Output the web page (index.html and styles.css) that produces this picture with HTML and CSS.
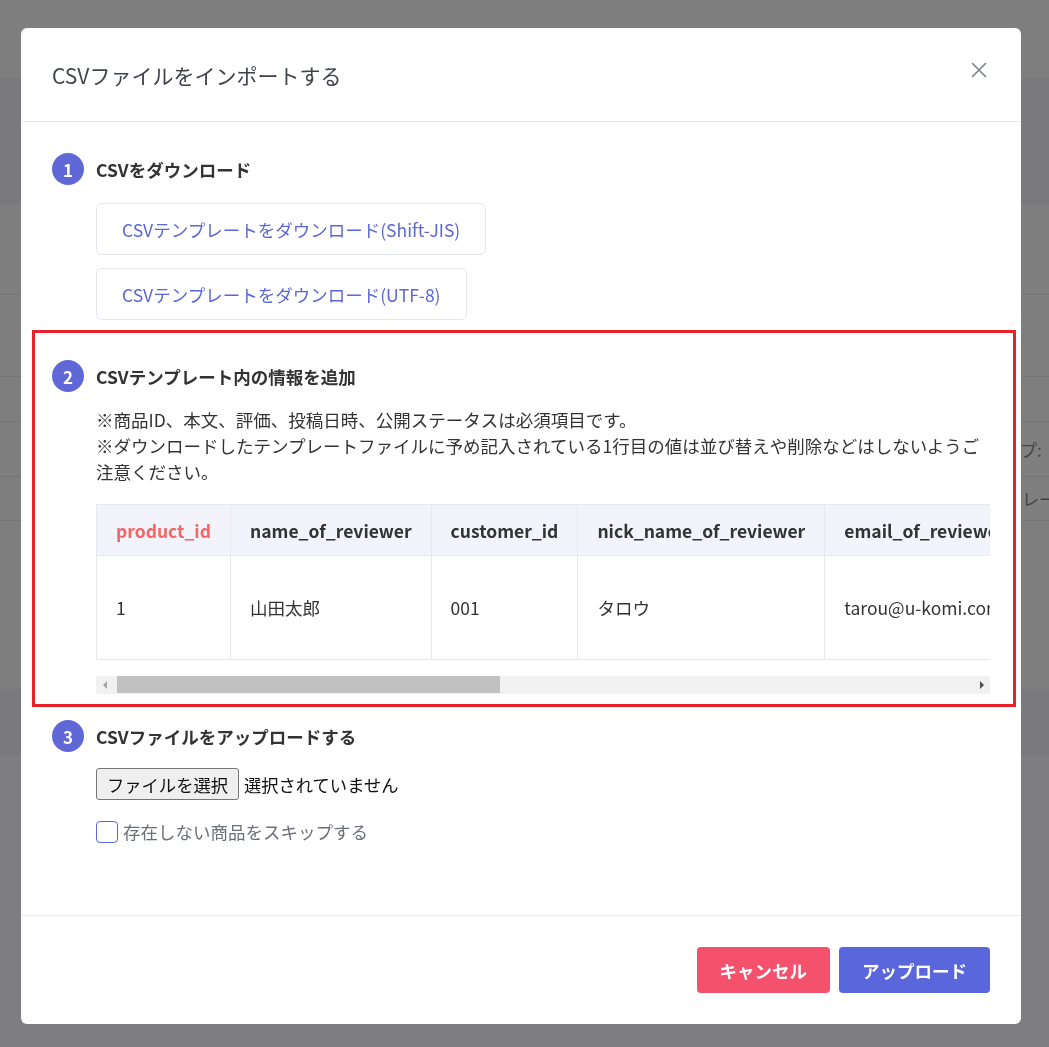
FILE: index.html
```html
<!DOCTYPE html>
<html lang="ja">
<head>
  <meta charset="UTF-8">
  <meta name="viewport" content="width=device-width, initial-scale=1.0">
  <title>CSVインポート</title>
  <link rel="stylesheet" href="styles.css">
</head>
<body>

<!-- Page behind the dialog -->
<div class="page">
  <div class="page-topbar"></div>
  <div class="page-head"></div>
  <div class="page-row row-a"></div>
  <div class="page-row row-b"></div>
  <div class="page-row row-c"></div>
  <div class="page-row row-d"><span class="page-label label-type">タイプ:</span></div>
  <div class="page-row row-e"><span class="page-label label-grade">グレード</span></div>
  <div class="page-row row-f"></div>
  <div class="page-head page-band"></div>
</div>

<!-- Import dialog -->
<div class="backdrop">
  <div class="modal">
    <div class="modal-header">
      <h2 class="modal-title">CSVファイルをインポートする</h2>
      <button class="close-btn" aria-label="閉じる">
        <svg width="16" height="16" viewBox="0 0 16 16">
          <path d="M1.5 1.5 L14.5 14.5 M14.5 1.5 L1.5 14.5" stroke="#7b8088" stroke-width="1.6" fill="none" stroke-linecap="round"/>
        </svg>
      </button>
    </div>

    <div class="modal-body">
      <section class="step">
        <div class="step-head">
          <span class="step-num">1</span>
          <h3 class="step-title">CSVをダウンロード</h3>
        </div>
        <div class="step-content download-list">
          <a href="#" class="download-btn">CSVテンプレートをダウンロード(Shift-JIS)</a>
          <a href="#" class="download-btn">CSVテンプレートをダウンロード(UTF-8)</a>
        </div>
      </section>

      <section class="step step-marked">
        <div class="step-head">
          <span class="step-num">2</span>
          <h3 class="step-title">CSVテンプレート内の情報を追加</h3>
        </div>
        <div class="step-content">
          <p class="notes">※商品ID、本文、評価、投稿日時、公開ステータスは必須項目です。<br>※ダウンロードしたテンプレートファイルに予め記入されている1行目の値は並び替えや削除などはしないようご注意ください。</p>
          <div class="table-scroll">
            <table class="sample-table">
              <thead>
                <tr>
                  <th class="required">product_id</th>
                  <th>name_of_reviewer</th>
                  <th>customer_id</th>
                  <th>nick_name_of_reviewer</th>
                  <th>email_of_reviewer</th>
                  <th class="required col-title">title</th>
                  <th class="required col-body">body</th>
                  <th class="required col-rating">rating</th>
                  <th class="required col-date">posted_at</th>
                  <th class="required col-status">status</th>
                </tr>
              </thead>
              <tbody>
                <tr>
                  <td>1</td>
                  <td>山田太郎</td>
                  <td>001</td>
                  <td>タロウ</td>
                  <td>tarou@u-komi.com</td>
                  <td>とても良い商品です</td>
                  <td>サイズもぴったりで<br>とても気に入っています。<br>また購入します。</td>
                  <td>5</td>
                  <td>2020/01/01 12:00</td>
                  <td>1</td>
                </tr>
              </tbody>
            </table>
          </div>
          <!-- scrollbars are hidden in the capture, so draw the classic one -->
          <div class="scrollbar">
            <span class="sb-arrow sb-left"></span>
            <div class="sb-track"><div class="sb-thumb"></div></div>
            <span class="sb-arrow sb-right"></span>
          </div>
        </div>
      </section>

      <section class="step">
        <div class="step-head">
          <span class="step-num">3</span>
          <h3 class="step-title">CSVファイルをアップロードする</h3>
        </div>
        <div class="step-content">
          <div class="file-row">
            <button class="file-btn">ファイルを選択</button>
            <span class="file-name">選択されていません</span>
          </div>
          <label class="check-row">
            <span class="check-box"></span>
            <span class="check-label">存在しない商品をスキップする</span>
          </label>
        </div>
      </section>
    </div>

    <div class="modal-footer">
      <button class="btn btn-cancel">キャンセル</button>
      <button class="btn btn-upload">アップロード</button>
    </div>
  </div>
</div>

</body>
</html>
```

FILE: styles.css
```css
body {
  margin: 0;
  padding: 0;
  font-family: "Noto Sans CJK JP", "Noto Sans", sans-serif;
  background-color: #fcfbff;
  color: #333;
  overflow: hidden;
}

/* page under the overlay */
.page {
  width: 100%;
  overflow: hidden;
}

.page-topbar {
  height: 78px;
  background-color: #ffffff;
}

.page-head {
  height: 127px;
  background-color: #f4f4fd;
}

.page-row {
  background-color: #ffffff;
  border-bottom: 1px solid #ebebeb;
  display: flex;
  align-items: center;
}

.row-a { height: 89px; }
.row-b { height: 81px; }
.row-c { height: 44px; }
.row-d { height: 54px; }
.row-e { height: 43px; }
.row-f { height: 168px; border-bottom: none; }

.page-band {
  height: 67px;
}

.page-label {
  flex-shrink: 0;
  white-space: nowrap;
  font-size: 17px;
  color: #8a8a8a;
}

.label-type {
  margin-left: 986px;
}

.label-grade {
  margin-left: 1005px;
}

/* overlay + dialog */
.backdrop {
  position: fixed;
  top: 0;
  left: 0;
  right: 0;
  bottom: 0;
  background-color: rgba(0, 0, 0, 0.5);
}

.modal {
  width: 1000px;
  margin: 28px 0 0 21px;
  background-color: #ffffff;
  border-radius: 6px;
}

.modal-header {
  height: 93px;
  padding: 0 31px;
  display: flex;
  align-items: center;
  justify-content: space-between;
  border-bottom: 1px solid #e9eaee;
}

.modal-title {
  margin: 0;
  font-size: 21px;
  font-weight: 400;
  color: #3f444b;
}

.close-btn {
  background: none;
  border: none;
  padding: 0;
  margin: 0 3px 10px 0;
  cursor: pointer;
  display: flex;
}

.modal-body {
  padding: 31px 31px 71px;
}

.step-head {
  display: flex;
  align-items: center;
  gap: 12px;
  height: 32px;
}

.step-num {
  width: 32px;
  height: 32px;
  border-radius: 50%;
  background-color: #5f68d6;
  color: #ffffff;
  font-size: 17px;
  font-weight: 700;
  display: flex;
  align-items: center;
  justify-content: center;
}

.step-title {
  margin: 0;
  font-size: 17.5px;
  font-weight: 700;
  color: #333;
}

.step-content {
  padding-left: 44px;
}

.download-list {
  margin-top: 18px;
  display: flex;
  flex-direction: column;
  align-items: flex-start;
  gap: 13px;
}

.download-btn {
  height: 50px;
  padding: 0 25px;
  display: flex;
  align-items: center;
  border: 1px solid #e4e6ef;
  border-radius: 6px;
  color: #5a67d8;
  font-size: 17.5px;
  text-decoration: none;
}

/* red highlight around step 2 */
.step-marked {
  margin: 10px -26px 0 -20px;
  padding: 27px 23px 10px 17px;
  border: 3px solid #e8202a;
}

.notes {
  margin: 15px 0 0;
  font-size: 17.5px;
  line-height: 26px;
  color: #333;
}

.table-scroll {
  margin-top: 19px;
  padding-bottom: 16px;
  overflow: hidden;
}

.sample-table {
  border-collapse: collapse;
  white-space: nowrap;
  font-size: 17.5px;
}

.sample-table th,
.sample-table td {
  padding: 0 19px;
  text-align: left;
  border: 1px solid #e8e8f0;
}

.sample-table th {
  height: 50px;
  background-color: #f3f3fb;
  font-weight: 700;
  color: #333;
}

.sample-table th.required {
  color: #f56565;
}

.sample-table .col-title { min-width: 180px; }
.sample-table .col-body { min-width: 330px; }
.sample-table .col-rating { min-width: 90px; }
.sample-table .col-date { min-width: 170px; }
.sample-table .col-status { min-width: 100px; }

.sample-table td {
  height: 103px;
  color: #333;
  font-weight: 400;
}

.scrollbar {
  height: 18px;
  display: flex;
  background-color: #f1f1f1;
}

.sb-arrow {
  width: 17px;
  display: flex;
  align-items: center;
  justify-content: center;
}

.sb-left::before {
  content: "";
  border-top: 4px solid transparent;
  border-bottom: 4px solid transparent;
  border-right: 4px solid #a3a3a3;
}

.sb-right::before {
  content: "";
  border-top: 4px solid transparent;
  border-bottom: 4px solid transparent;
  border-left: 4px solid #505050;
}

.sb-track {
  flex: 1;
  padding-left: 4px;
}

.sb-thumb {
  width: 383px;
  height: 17px;
  background-color: #c1c1c1;
}

.step-marked + .step {
  margin-top: 13px;
}

.file-row {
  margin-top: 16px;
  display: flex;
  align-items: center;
  gap: 5px;
}

.file-btn {
  height: 32px;
  padding: 0 10px;
  font-family: inherit;
  font-size: 17.3px;
  color: #111;
  background-color: #efefef;
  border: 1px solid #767676;
  border-radius: 3px;
}

.file-name {
  font-size: 17.3px;
  color: #111;
}

.check-row {
  margin-top: 19px;
  display: flex;
  align-items: center;
  gap: 5px;
}

.check-box {
  width: 20px;
  height: 20px;
  border: 1.5px solid #5a67d8;
  border-radius: 4px;
}

.check-label {
  font-size: 17.5px;
  color: #6b6f76;
}

.modal-footer {
  padding: 31px;
  display: flex;
  justify-content: flex-end;
  gap: 9px;
  border-top: 1px solid #e9eaee;
}

.btn {
  height: 46px;
  padding: 0 23px;
  border: none;
  border-radius: 4px;
  color: #ffffff;
  font-family: inherit;
  font-size: 17.5px;
  font-weight: 700;
  cursor: pointer;
}

.btn-cancel {
  background-color: #f4516d;
}

.btn-upload {
  background-color: #5a67dc;
}
```
